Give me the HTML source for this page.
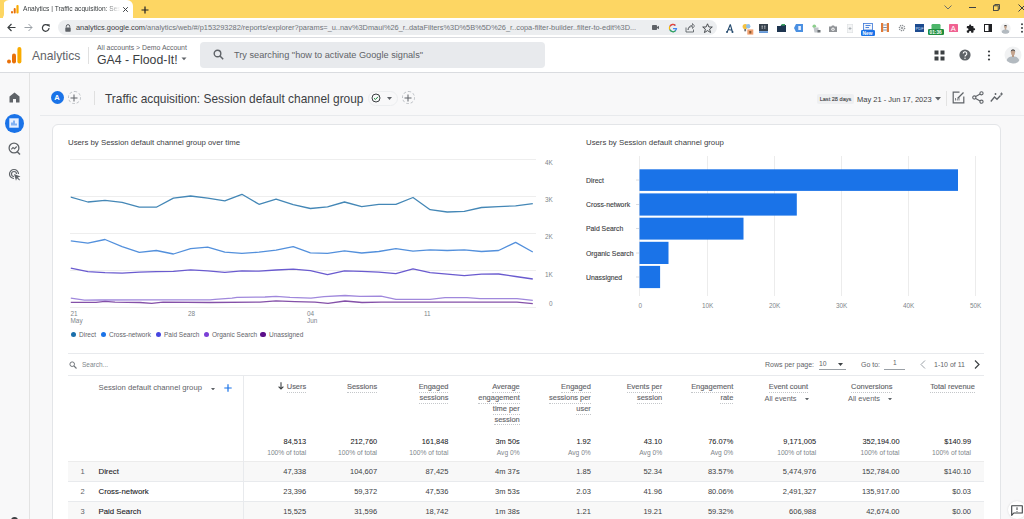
<!DOCTYPE html>
<html><head><meta charset="utf-8">
<style>
*{box-sizing:border-box;margin:0;padding:0}
html,body{width:1024px;height:519px;overflow:hidden;background:#f8f8f9;font-family:"Liberation Sans",sans-serif;color:#3c4043}
.a{position:absolute;white-space:nowrap}
svg{display:block}
#tabs{position:absolute;left:0;top:0;width:1024px;height:18px;background:#fdd663}
#tab{position:absolute;left:3px;top:0;width:130px;height:19px;background:#fff;border-radius:6px 6px 0 0}
#toolbar{position:absolute;left:0;top:18px;width:1024px;height:20px;background:#fff;border-bottom:1px solid #dadce0}
#omni{position:absolute;left:58px;top:20px;width:659px;height:15px;background:#eceef0;border-radius:8px}
#gahdr{position:absolute;left:0;top:38px;width:1024px;height:35px;background:#fff;border-bottom:1px solid #dadce0}
#nav{position:absolute;left:0;top:73px;width:30px;height:446px;background:#f8f8f9;border-right:1px solid #e3e3e3}
#titlerow{position:absolute;left:40px;top:73px;width:984px;height:43px;border-bottom:1px solid #e8eaed}
#card{position:absolute;left:52px;top:124px;width:949px;height:420px;background:#fff;border:1px solid #e3e5e8;border-radius:6px}
.u{border-bottom:1px dotted #c4c7ca;padding-bottom:0.5px}
.hd{font-size:7.45px;line-height:10.9px;color:#5f6368;-webkit-text-stroke:0.12px #5f6368}
.tt{font-size:7.4px;line-height:10px;color:#202124;-webkit-text-stroke:0.05px #202124}
.st{font-size:6.7px;line-height:9px;color:#80868b}
.rv{font-size:7.5px;line-height:10px;color:#3c4043}
.rn{font-size:7.5px;line-height:10px;color:#5f6368}
.rl{font-size:7.8px;line-height:10px;color:#202124;-webkit-text-stroke:0.1px #202124}

</style></head><body>

<div id="tabs"></div>
<div id="tab"></div>
<div id="toolbar"></div>
<div id="omni"></div>

<!-- tab strip -->
<div class="a" style="left:0;top:0;width:4px;height:18px;background:#fdd663;border-bottom-right-radius:4px;z-index:2"></div>
<svg class="a" style="left:11px;top:5px" width="8" height="9" viewBox="0 0 8 9"><rect x="0" y="6" width="2" height="2.6" rx="1" fill="#e8710a"/><rect x="2.7" y="3" width="2" height="5.6" rx="1" fill="#e8710a"/><rect x="5.4" y="0" width="2.2" height="8.6" rx="1" fill="#f9ab00"/></svg>
<div class="a" style="left:23px;top:5px;font-size:6.6px;color:#3c4043;width:97px;overflow:hidden;-webkit-mask-image:linear-gradient(90deg,#000 85%,transparent)">Analytics | Traffic acquisition: Session default</div>
<svg class="a" style="left:121.5px;top:6px" width="7" height="7" viewBox="0 0 7 7"><path d="M1.2 1.2L5.8 5.8M5.8 1.2L1.2 5.8" stroke="#3c4043" stroke-width="1"/></svg>
<svg class="a" style="left:140.5px;top:5.5px" width="8" height="8" viewBox="0 0 8 8"><path d="M4 0.5V7.5M0.5 4H7.5" stroke="#202124" stroke-width="1.2"/></svg>
<svg class="a" style="left:944px;top:5px" width="8" height="5" viewBox="0 0 8 5"><path d="M0.5 0.5L4 4L7.5 0.5" stroke="#5f6368" stroke-width="0.9" fill="none"/></svg>
<div class="a" style="left:969px;top:7px;width:7px;height:1px;background:#3c4043"></div>
<svg class="a" style="left:993px;top:4px" width="7" height="7" viewBox="0 0 7 7"><rect x="0.5" y="1.8" width="4.7" height="4.7" fill="none" stroke="#3c4043" stroke-width="0.9"/><path d="M1.8 1.8V0.5H6.5V5.2H5.2" fill="none" stroke="#3c4043" stroke-width="0.9"/></svg>
<svg class="a" style="left:1018px;top:3.5px" width="8" height="8" viewBox="0 0 8 8"><path d="M0.5 0.5L7.5 7.5M7.5 0.5L0.5 7.5" stroke="#3c4043" stroke-width="1"/></svg>
<!-- toolbar -->
<svg class="a" style="left:7px;top:23px" width="9" height="9" viewBox="0 0 9 9"><path d="M8.5 4.5H1M4.5 1L1 4.5L4.5 8" stroke="#3c4043" stroke-width="1.2" fill="none"/></svg>
<svg class="a" style="left:24px;top:23px" width="9" height="9" viewBox="0 0 9 9"><path d="M0.5 4.5H8M4.5 1L8 4.5L4.5 8" stroke="#9aa0a6" stroke-width="1" fill="none"/></svg>
<svg class="a" style="left:41px;top:23px" width="10" height="10" viewBox="0 0 10 10"><path d="M8 5A3.3 3.3 0 1 1 7 2.6" stroke="#3c4043" stroke-width="1.2" fill="none"/><path d="M5.5 1.2H8.6V4.3Z" fill="#3c4043"/></svg>
<svg class="a" style="left:65px;top:24px" width="6" height="8" viewBox="0 0 6 8"><path d="M1.3 3.5V2.3A1.7 1.7 0 0 1 4.7 2.3V3.5" stroke="#5f6368" stroke-width="1" fill="none"/><rect x="0.3" y="3.4" width="5.4" height="4.3" rx="0.6" fill="#5f6368"/></svg>
<div class="a" style="left:76px;top:23px;font-size:7.4px;line-height:9px;color:#6f7378"><span style="color:#3c4043">analytics.google.com</span>/analytics/web/#/p153293282/reports/explorer?params=_u..nav%3Dmaui%26_r..dataFilters%3D%5B%5D%26_r..copa-filter-builder..filter-to-edit%3D...</div>

<!-- omnibox icons -->
<svg class="a" style="left:651.5px;top:25px" width="7" height="5" viewBox="0 0 7 5"><rect x="0" y="0" width="5" height="5" rx="0.8" fill="#5f6368"/><path d="M5 2L7 0.7V4.3L5 3Z" fill="#5f6368"/></svg>
<svg class="a" style="left:668px;top:23px" width="10" height="10" viewBox="0 0 10 10"><path d="M9.2 5.1H5V6.3H7.6A2.9 2.9 0 1 1 6.9 2.9L7.8 2A4.1 4.1 0 1 0 9.2 5.1Z" fill="#4285f4"/><path d="M1.3 3A4.1 4.1 0 0 1 7.8 2L6.9 2.9A2.9 2.9 0 0 0 2.4 3.6Z" fill="#ea4335"/><path d="M1.3 3L2.4 3.6A2.9 2.9 0 0 0 2.4 6.4L1.3 7A4.1 4.1 0 0 1 1.3 3Z" fill="#fbbc05"/><path d="M1.3 7L2.4 6.4A2.9 2.9 0 0 0 7.1 7.3L8 8.1A4.1 4.1 0 0 1 1.3 7Z" fill="#34a853"/></svg>
<svg class="a" style="left:685px;top:23px" width="10" height="10" viewBox="0 0 10 10"><path d="M1 4.5V9H8.5V6.5" stroke="#5f6368" stroke-width="0.9" fill="none"/><path d="M3 7C3.5 4.5 5 3.5 7.5 3.5V5.5L9.5 3L7.5 0.5V2.3C4.5 2.5 3.2 4.5 3 7Z" stroke="#5f6368" stroke-width="0.8" fill="none"/></svg>
<svg class="a" style="left:702px;top:22.5px" width="11" height="11" viewBox="0 0 11 11"><path d="M5.5 0.8L6.9 4H10.3L7.6 6.1L8.6 9.6L5.5 7.6L2.4 9.6L3.4 6.1L0.7 4H4.1Z" stroke="#3c4043" stroke-width="0.9" fill="none" stroke-linejoin="round"/></svg>
<!-- extension icons -->
<svg class="a" style="left:725px;top:23.5px" width="9" height="9" viewBox="0 0 9 9"><path d="M5.3 0.5L2.2 8M5.3 0.5L7.5 8M3.5 5.5L7 6.3" stroke="#244a6e" stroke-width="1.1" fill="none"/><circle cx="2" cy="8" r="1" fill="#244a6e"/><circle cx="7.5" cy="8" r="1" fill="#244a6e"/></svg>
<svg class="a" style="left:742px;top:23px" width="12" height="12" viewBox="0 0 12 12"><circle cx="3.2" cy="3.5" r="2.6" fill="#f5c242"/><rect x="2.3" y="6" width="1.8" height="2.3" fill="#6b7075"/><circle cx="6.2" cy="3.3" r="2.2" fill="#8fc0ea"/><rect x="5.3" y="6.4" width="6" height="5.2" fill="#f0a070"/><rect x="7.3" y="8" width="2" height="2.5" fill="#8a5a30"/></svg>
<svg class="a" style="left:759px;top:23.5px" width="9" height="9" viewBox="0 0 9 9"><rect x="0" y="0" width="9" height="7" fill="#37424d"/><path d="M2.5 2.2H4M5 2.2H6.5M2.5 4H4M5 4H6.5" stroke="#e8eaed" stroke-width="0.8"/><rect x="0" y="7.3" width="9" height="1.5" fill="#3f7fcf"/></svg>
<svg class="a" style="left:777px;top:24px" width="9" height="8" viewBox="0 0 9 8"><path d="M0 2H3.5L4.3 1H9V8H0Z" fill="#1e3550"/><rect x="4.5" y="0" width="3.5" height="1.6" fill="#3aa35f"/></svg>
<svg class="a" style="left:794px;top:24px" width="9" height="8" viewBox="0 0 9 8"><path d="M2 0H9V8H2L0 4Z" fill="#4a90e2"/><rect x="4.3" y="2" width="2.6" height="4" fill="#e8f0fe"/></svg>
<svg class="a" style="left:811.5px;top:23.5px" width="9" height="9" viewBox="0 0 9 9"><circle cx="2.3" cy="2.3" r="1.8" fill="#8ccf8c"/><path d="M1.5 3.5H6.5V8.5H2.5Z" fill="#c0c4c8"/><path d="M5.5 6H8.5V8.5H5.5Z" fill="#6b7075"/></svg>
<svg class="a" style="left:828.5px;top:24.5px" width="8" height="7" viewBox="0 0 8 7"><path d="M0 1.5H2.3L3 0.5H5L5.7 1.5H8V7H0Z" fill="#8f9296"/><circle cx="4" cy="4.2" r="1.6" fill="#fff"/><circle cx="4" cy="4.2" r="0.8" fill="#8f9296"/></svg>
<svg class="a" style="left:846.5px;top:23.5px" width="6" height="9" viewBox="0 0 6 9"><rect x="0.3" y="0.3" width="5.4" height="8.4" fill="#f4f5f6" stroke="#dcdfe2" stroke-width="0.6"/><path d="M1.5 4.5H4.5M3 3V6" stroke="#9aa0a6" stroke-width="0.7"/></svg>
<svg class="a" style="left:860.5px;top:22.5px" width="14" height="13" viewBox="0 0 14 13"><rect x="2.5" y="0.5" width="9" height="6.5" fill="#f3f6fb" stroke="#3c78d8" stroke-width="0.8"/><path d="M4.5 2.5H9.5M4.5 4.5H8" stroke="#3c78d8" stroke-width="0.9"/><rect x="0" y="7" width="14" height="6" rx="1.2" fill="#1a73e8"/><text x="1.6" y="11.8" font-size="4.8" font-weight="700" fill="#fff" font-family="Liberation Sans">New</text></svg>
<svg class="a" style="left:880.5px;top:23.3px" width="8" height="9" viewBox="0 0 8 9"><rect x="0" y="0" width="2.2" height="9" fill="#e07b39"/><rect x="5.8" y="0" width="2.2" height="9" fill="#e07b39"/><path d="M2.2 2H5.8M2.2 4.5H5.8M2.2 7H5.8" stroke="#7d8fa8" stroke-width="1"/></svg>
<svg class="a" style="left:898px;top:23.5px" width="8" height="8" viewBox="0 0 8 8"><circle cx="4" cy="4" r="2.6" stroke="#8a8e92" stroke-width="1.4" fill="none" stroke-dasharray="1.2 0.8"/><circle cx="4" cy="4" r="1" fill="#8a8e92"/></svg>
<svg class="a" style="left:914.5px;top:23.5px" width="9" height="8" viewBox="0 0 9 8"><rect x="0" y="0" width="9" height="8" fill="#1d4b8f"/><text x="0.6" y="5.6" font-size="4" fill="#d6e4f7" font-family="Liberation Sans">PDF</text></svg>
<svg class="a" style="left:928px;top:23.5px" width="16" height="11" viewBox="0 0 16 11"><rect x="3.5" y="0" width="9" height="5.5" rx="1.2" fill="#4db66a"/><rect x="0" y="5" width="16" height="6" rx="1.3" fill="#1e8e3e"/><text x="1.5" y="9.8" font-size="4.8" font-weight="700" fill="#fff" font-family="Liberation Sans">01:36</text></svg>
<svg class="a" style="left:949px;top:23.5px" width="9" height="8.5" viewBox="0 0 9 8.5"><rect x="0" y="0" width="9" height="8.5" rx="0.6" fill="#f06292"/><text x="1.7" y="7.3" font-size="7.5" fill="#fff" font-family="Liberation Sans">A</text></svg>
<svg class="a" style="left:966px;top:23.5px" width="9.5" height="9.5" viewBox="0 0 24 24"><path d="M20.5 11H19V7c0-1.1-.9-2-2-2h-4V3.5C13 2.120 11.88 1 10.5 1S8 2.12 8 3.5V5H4c-1.1 0-1.99.9-1.99 2v3.8H3.5c1.49 0 2.7 1.21 2.7 2.7s-1.21 2.7-2.7 2.7H2V20c0 1.1.9 2 2 2h3.8v-1.5c0-1.49 1.21-2.7 2.7-2.7 1.49 0 2.7 1.21 2.7 2.7V22H17c1.1 0 2-.9 2-2v-4h1.5c1.38 0 2.5-1.12 2.5-2.5S21.88 11 20.5 11z" fill="#202124"/></svg>
<svg class="a" style="left:983.5px;top:24px" width="8.5" height="8" viewBox="0 0 8.5 8"><rect x="0.5" y="0.5" width="7.5" height="7" fill="none" stroke="#202124" stroke-width="1"/><rect x="4.5" y="0.5" width="3.5" height="7" fill="#202124"/></svg>
<svg class="a" style="left:1000px;top:22.5px" width="11" height="11" viewBox="0 0 18 18"><defs><clipPath id="av1"><circle cx="9" cy="9" r="8.5"/></clipPath></defs><circle cx="9" cy="9" r="8.5" fill="#f1f2f3"/><g clip-path="url(#av1)"><path d="M2 19C2 12.5 4.5 10.5 9 10.5S16 12.5 16 19Z" fill="#b3bac0"/><rect x="8" y="8.5" width="2" height="2.5" fill="#b89a85"/><ellipse cx="9" cy="6.6" rx="2.1" ry="2.7" fill="#c4a48e"/><path d="M6.8 6C6.8 3.8 7.8 3.4 9 3.4S11.2 3.8 11.2 6C10.7 5 10 4.6 9 4.6S7.3 5 6.8 6Z" fill="#2e2e2e"/></g></svg>
<svg class="a" style="left:1020px;top:23px" width="4" height="10" viewBox="0 0 4 10"><circle cx="2" cy="1.3" r="1" fill="#3c4043"/><circle cx="2" cy="5" r="1" fill="#3c4043"/><circle cx="2" cy="8.7" r="1" fill="#3c4043"/></svg>
<div id="gahdr"></div>
<div id="nav"></div>
<!-- GA header -->
<svg class="a" style="left:7px;top:47px" width="15" height="17" viewBox="0 0 15 17"><circle cx="2" cy="14.6" r="2" fill="#e8710a"/><rect x="5" y="6.5" width="4" height="10.1" rx="2" fill="#e8710a"/><rect x="10.4" y="0" width="4" height="16.6" rx="2" fill="#f9ab00"/></svg>
<div class="a" style="left:32px;top:49px;font-size:12.1px;line-height:15px;color:#5f6368">Analytics</div>
<div class="a" style="left:88px;top:47px;width:1px;height:17px;background:#e0e0e0"></div>
<div class="a" style="left:97px;top:43px;font-size:6.9px;line-height:9px;color:#5f6368">All accounts &gt; Demo Account</div>
<div class="a" style="left:97px;top:52.5px;font-size:12.3px;line-height:14px;color:#3c4043">GA4 - Flood-It!</div>
<svg class="a" style="left:181px;top:57px" width="6" height="4" viewBox="0 0 6 4"><path d="M0.5 0.5H5.5L3 3.3Z" fill="#5f6368"/></svg>
<div class="a" style="left:200px;top:42px;width:345px;height:26px;background:#e8eaed;border-radius:4px"></div>
<svg class="a" style="left:213px;top:49px" width="11" height="11" viewBox="0 0 11 11"><circle cx="4.5" cy="4.5" r="3.3" stroke="#5f6368" stroke-width="1.4" fill="none"/><path d="M7 7L10.2 10.2" stroke="#5f6368" stroke-width="1.5"/></svg>
<div class="a" style="left:234px;top:49px;font-size:9.2px;line-height:12px;color:#5f6368">Try searching "how to activate Google signals"</div>
<svg class="a" style="left:934px;top:50px" width="11" height="11" viewBox="0 0 11 11"><rect x="0.5" y="0.5" width="4" height="4" fill="#3c4043"/><rect x="6.5" y="0.5" width="4" height="4" fill="#3c4043"/><rect x="0.5" y="6.5" width="4" height="4" fill="#3c4043"/><rect x="6.5" y="6.5" width="4" height="4" fill="#3c4043"/></svg>
<svg class="a" style="left:959px;top:49px" width="12" height="12" viewBox="0 0 12 12"><circle cx="6" cy="6" r="5.6" fill="#5f6368"/><path d="M4.2 4.6A1.8 1.8 0 1 1 6.8 6.2C6.2 6.6 6 6.9 6 7.6" stroke="#fff" stroke-width="1.1" fill="none"/><circle cx="6" cy="9.2" r="0.7" fill="#fff"/></svg>
<svg class="a" style="left:987px;top:50px" width="4" height="11" viewBox="0 0 4 11"><circle cx="2" cy="1.5" r="1.1" fill="#3c4043"/><circle cx="2" cy="5.5" r="1.1" fill="#3c4043"/><circle cx="2" cy="9.5" r="1.1" fill="#3c4043"/></svg>
<svg class="a" style="left:1004px;top:46px" width="18" height="18" viewBox="0 0 18 18"><defs><clipPath id="av2"><circle cx="9" cy="9" r="8.5"/></clipPath></defs><circle cx="9" cy="9" r="8.5" fill="#f1f2f3"/><g clip-path="url(#av2)"><path d="M2 19C2 12.5 4.5 10.5 9 10.5S16 12.5 16 19Z" fill="#b3bac0"/><rect x="8" y="8.5" width="2" height="2.5" fill="#b89a85"/><ellipse cx="9" cy="6.6" rx="2.1" ry="2.7" fill="#c4a48e"/><path d="M6.8 6C6.8 3.8 7.8 3.4 9 3.4S11.2 3.8 11.2 6C10.7 5 10 4.6 9 4.6S7.3 5 6.8 6Z" fill="#2e2e2e"/></g></svg>

<div id="titlerow"></div>
<!-- left nav -->
<svg class="a" style="left:9px;top:92px" width="11" height="11" viewBox="0 0 11 11"><path d="M5.5 0.5L10.5 4.5V10.5H7V7H4V10.5H0.5V4.5Z" fill="#5f6368"/></svg>
<div class="a" style="left:4.5px;top:113.5px;width:19px;height:19px;border-radius:50%;background:#1a73e8"></div>
<svg class="a" style="left:9px;top:118px" width="10" height="10" viewBox="0 0 10 10"><rect x="0.3" y="0.3" width="9.4" height="9.4" fill="#e8f0fe"/><path d="M3 7.5V4.5M5 7.5V2.5M7 7.5V5.5" stroke="#1a73e8" stroke-width="1"/></svg>
<svg class="a" style="left:8px;top:142px" width="13" height="13" viewBox="0 0 13 13"><circle cx="6" cy="6" r="4.9" stroke="#5f6368" stroke-width="1.3" fill="none"/><path d="M3.3 7.3L5 5.5L6.6 6.7L8.7 4.5" stroke="#5f6368" stroke-width="1.1" fill="none"/><path d="M9 9.5L12 12.5" stroke="#5f6368" stroke-width="1.4"/></svg>
<svg class="a" style="left:8px;top:168px" width="13" height="13" viewBox="0 0 13 13"><path d="M10.5 6A4.5 4.5 0 1 0 6 10.5" stroke="#5f6368" stroke-width="1.2" fill="none"/><path d="M8.5 6A2.5 2.5 0 1 0 6 8.5" stroke="#5f6368" stroke-width="1.1" fill="none"/><path d="M6 6L12.5 8.5L9.8 9.5L12 11.8L11.3 12.5L9 10.3L8 12.7Z" fill="#5f6368"/></svg>
<!-- title row -->
<div class="a" style="left:50.5px;top:91px;width:13px;height:13px;border-radius:50%;background:#1a73e8;color:#fff;font-size:7.5px;font-weight:700;text-align:center;line-height:13px">A</div>
<div class="a" style="left:67.5px;top:91px;width:13px;height:13px;border-radius:50%;border:1px dashed #bdc1c6"></div>
<svg class="a" style="left:70px;top:93.5px" width="8" height="8" viewBox="0 0 8 8"><path d="M4 0.5V7.5M0.5 4H7.5" stroke="#5f6368" stroke-width="1"/></svg>
<div class="a" style="left:94px;top:91px;width:1px;height:14px;background:#e0e0e0"></div>
<div class="a" style="left:105px;top:91.5px;font-size:11.9px;line-height:15px;color:#3c4043">Traffic acquisition: Session default channel group</div>
<div class="a" style="left:368px;top:90.5px;width:30px;height:15px;border-radius:8px;border:1px solid #eceef0"></div>
<svg class="a" style="left:371px;top:93px" width="10" height="10" viewBox="0 0 10 10"><circle cx="5" cy="5" r="4" stroke="#3c4043" stroke-width="1" fill="none"/><path d="M3 5.2L4.4 6.5L7 3.8" stroke="#188038" stroke-width="1" fill="none"/></svg>
<svg class="a" style="left:387px;top:97px" width="5" height="3" viewBox="0 0 5 3"><path d="M0 0H5L2.5 3Z" fill="#5f6368"/></svg>
<div class="a" style="left:401.5px;top:91px;width:13px;height:13px;border-radius:50%;border:1px dashed #bdc1c6"></div>
<svg class="a" style="left:404px;top:93.5px" width="8" height="8" viewBox="0 0 8 8"><path d="M4 0.5V7.5M0.5 4H7.5" stroke="#5f6368" stroke-width="1"/></svg>
<div class="a" style="left:817px;top:94px;width:37px;height:10px;border-radius:2px;background:#eeeff1;font-size:5.6px;line-height:10px;color:#3c4043;text-align:center;-webkit-text-stroke:0.1px #3c4043">Last 28 days</div>
<div class="a" style="left:857px;top:93.8px;font-size:7.5px;line-height:12px;color:#3c4043">May 21 - Jun 17, 2023</div>
<svg class="a" style="left:935px;top:97px" width="6" height="4" viewBox="0 0 6 4"><path d="M0 0H6L3 3.5Z" fill="#5f6368"/></svg>
<div class="a" style="left:946px;top:91px;width:1px;height:15px;background:#e3e3e3"></div>
<svg class="a" style="left:952px;top:91px" width="13" height="13" viewBox="0 0 13 13"><path d="M7.5 1.2H1.2V11.8H11.8V5.5" stroke="#5f6368" stroke-width="1.2" fill="none"/><path d="M5.5 7.5L11.5 1.5" stroke="#5f6368" stroke-width="1.3"/><path d="M3.5 9.5V7M5.3 9.5V8M7 9.5V6.5" stroke="#5f6368" stroke-width="0.8"/></svg>
<svg class="a" style="left:972px;top:91px" width="12" height="13" viewBox="0 0 12 13"><circle cx="9.5" cy="2.3" r="1.6" stroke="#5f6368" stroke-width="1.1" fill="none"/><circle cx="2.3" cy="6.5" r="1.6" stroke="#5f6368" stroke-width="1.1" fill="none"/><circle cx="9.5" cy="10.7" r="1.6" stroke="#5f6368" stroke-width="1.1" fill="none"/><path d="M3.7 5.6L8.1 3.1M3.7 7.4L8.1 9.9" stroke="#5f6368" stroke-width="1.1"/></svg>
<svg class="a" style="left:990px;top:92px" width="14" height="11" viewBox="0 0 14 11"><path d="M0.8 9.5L4.5 5L7 7.3L10.5 3.5" stroke="#5f6368" stroke-width="1.3" fill="none"/><path d="M11.5 0.5V3.5M10 2H13M5.5 1V3M4.5 2H6.5" stroke="#5f6368" stroke-width="0.9"/></svg>

<div id="card"></div>
<!-- card content: charts -->
<div class="a" style="left:68px;top:138px;font-size:7.8px;line-height:10px;color:#3c4043">Users by Session default channel group over time</div>
<svg class="a" style="left:0;top:0" width="1024" height="519" viewBox="0 0 1024 519">
<g stroke="#eeeeee" stroke-width="1">
<path d="M70 159.5H536M70 196.5H536M70 233.5H536M70 270.5H536M70 307.5H536"/>
</g>
<g fill="none" stroke-width="1.3" stroke-linejoin="round">
<polyline points="70.8,298.2 84.5,300.2 100.0,300.0 145.0,299.8 210.0,299.8 215.0,299.4 232.0,298.2 237.0,297.4 265.0,297.0 276.0,296.4 290.0,297.4 311.0,298.2 324.0,296.6 345.0,295.5 360.0,296.4 381.0,296.1 396.0,299.4 430.0,299.4 445.0,297.7 467.0,297.7 480.0,298.6 517.0,298.6 532.8,300.3" stroke="#a088dc"/>
<polyline points="70.8,302.3 96.0,302.3 105.0,301.3 115.0,302.1 140.0,302.5 151.7,303.4 163.0,302.1 210.0,302.5 260.0,302.1 276.0,300.8 295.0,301.6 315.0,302.1 328.0,303.3 345.0,301.0 362.0,302.5 381.0,302.1 445.0,302.1 517.0,302.1 532.8,303.7" stroke="#8450a8"/>
<polyline points="70.8,268.2 87.9,271.7 105.0,272.7 122.1,273.2 139.3,272.1 156.3,271.7 173.4,271.4 190.6,269.8 207.7,270.8 224.8,272.3 241.9,270.8 259.0,271.2 276.1,270.0 293.2,269.2 310.4,270.6 327.5,274.6 344.5,270.8 361.7,271.4 378.8,272.1 395.9,273.7 413.0,268.9 430.1,272.7 447.2,274.1 464.3,275.6 481.5,274.2 498.6,274.0 515.6,276.5 532.8,279.0" stroke="#6a5bcf"/>
<polyline points="70.8,240.9 87.9,243.2 105.0,239.5 122.1,246.7 139.3,252.4 156.3,250.5 173.4,254.0 190.6,248.6 207.7,247.1 224.8,252.1 241.9,253.4 259.0,252.1 276.1,250.2 293.2,246.7 310.4,252.9 327.5,253.4 344.5,250.9 361.7,253.0 378.8,251.5 395.9,248.6 413.0,251.1 430.1,249.8 447.2,250.5 464.3,249.9 481.5,251.5 498.6,250.5 515.6,242.4 532.8,252.0" stroke="#5390dc"/>
<polyline points="70.8,197.1 87.9,202.0 105.0,200.4 122.1,202.3 139.3,207.2 156.3,207.2 173.4,198.1 190.6,196.0 207.7,198.1 224.8,200.8 241.9,194.3 259.0,204.3 276.1,199.1 293.2,204.7 310.4,208.5 327.5,206.8 344.5,202.0 361.7,206.6 378.8,204.3 395.9,204.3 413.0,197.5 430.1,209.7 447.2,212.0 464.3,211.4 481.5,207.5 498.6,206.6 515.6,205.8 532.8,203.7" stroke="#4487b6"/>
</g>
<g stroke="#ececec" stroke-width="1">
<path d="M639.5 156V296M707.5 156V296M774.5 156V296M841.5 156V296M908.5 156V296M975.5 156V296"/>
</g>
<g fill="#1a73e8">
<rect x="639.5" y="169.3" width="318.5" height="21.6"/>
<rect x="639.5" y="193.4" width="157.3" height="22.2"/>
<rect x="639.5" y="217.7" width="104" height="21.9"/>
<rect x="639.5" y="241.8" width="29" height="22.2"/>
<rect x="639.5" y="265.9" width="20.6" height="22.2"/>
</g>
<g stroke="#dadce0" stroke-width="1"><path d="M636 180H639M636 204.5H639M636 228.5H639M636 253H639M636 277H639"/></g>
</svg>
<div class="a" style="left:545px;top:158px;font-size:6.4px;line-height:9px;color:#80868b">4K</div>
<div class="a" style="left:545px;top:195px;font-size:6.4px;line-height:9px;color:#80868b">3K</div>
<div class="a" style="left:545px;top:232px;font-size:6.4px;line-height:9px;color:#80868b">2K</div>
<div class="a" style="left:545px;top:270px;font-size:6.4px;line-height:9px;color:#80868b">1K</div>
<div class="a" style="left:549px;top:299px;font-size:6.4px;line-height:9px;color:#80868b">0</div>
<div class="a" style="left:70.5px;top:310px;font-size:6.4px;line-height:7px;color:#80868b">21<br>May</div>
<div class="a" style="left:188px;top:310px;font-size:6.4px;line-height:7px;color:#80868b">28</div>
<div class="a" style="left:307px;top:310px;font-size:6.4px;line-height:7px;color:#80868b">04<br>Jun</div>
<div class="a" style="left:424px;top:310px;font-size:6.4px;line-height:7px;color:#80868b">11</div>
<div class="a" style="left:70.6px;top:332.1px;width:5.2px;height:5.2px;border-radius:50%;background:#1a6fab"></div><div class="a" style="left:79px;top:330px;font-size:6.5px;line-height:9px;color:#5f6368">Direct</div>
<div class="a" style="left:101.1px;top:332.1px;width:5.2px;height:5.2px;border-radius:50%;background:#1a73e8"></div><div class="a" style="left:109px;top:330px;font-size:6.5px;line-height:9px;color:#5f6368">Cross-network</div>
<div class="a" style="left:155.9px;top:332.1px;width:5.2px;height:5.2px;border-radius:50%;background:#4646e0"></div><div class="a" style="left:164px;top:330px;font-size:6.5px;line-height:9px;color:#5f6368">Paid Search</div>
<div class="a" style="left:203.8px;top:332.1px;width:5.2px;height:5.2px;border-radius:50%;background:#7b3fd6"></div><div class="a" style="left:212px;top:330px;font-size:6.5px;line-height:9px;color:#5f6368">Organic Search</div>
<div class="a" style="left:260.4px;top:332.1px;width:5.2px;height:5.2px;border-radius:50%;background:#5b0e8a"></div><div class="a" style="left:269px;top:330px;font-size:6.5px;line-height:9px;color:#5f6368">Unassigned</div>

<div class="a" style="left:586px;top:138px;font-size:7.8px;line-height:10px;color:#3c4043">Users by Session default channel group</div>
<div class="a" style="left:586px;top:175.5px;font-size:6.85px;line-height:9px;color:#3c4043;-webkit-text-stroke:0.12px #3c4043">Direct</div>
<div class="a" style="left:586px;top:200px;font-size:6.85px;line-height:9px;color:#3c4043;-webkit-text-stroke:0.12px #3c4043">Cross-network</div>
<div class="a" style="left:586px;top:224px;font-size:6.85px;line-height:9px;color:#3c4043;-webkit-text-stroke:0.12px #3c4043">Paid Search</div>
<div class="a" style="left:586px;top:248.5px;font-size:6.85px;line-height:9px;color:#3c4043;-webkit-text-stroke:0.12px #3c4043">Organic Search</div>
<div class="a" style="left:586px;top:272.5px;font-size:6.85px;line-height:9px;color:#3c4043;-webkit-text-stroke:0.12px #3c4043">Unassigned</div>
<div class="a" style="left:638.5px;top:301px;font-size:6.4px;line-height:9px;color:#80868b">0</div>
<div class="a" style="left:702px;top:301px;font-size:6.4px;line-height:9px;color:#80868b">10K</div>
<div class="a" style="left:769px;top:301px;font-size:6.4px;line-height:9px;color:#80868b">20K</div>
<div class="a" style="left:836px;top:301px;font-size:6.4px;line-height:9px;color:#80868b">30K</div>
<div class="a" style="left:903px;top:301px;font-size:6.4px;line-height:9px;color:#80868b">40K</div>
<div class="a" style="left:970px;top:301px;font-size:6.4px;line-height:9px;color:#80868b">50K</div>



<!-- table -->
<div class="a" style="left:68px;top:353px;width:916px;height:1px;background:#e8eaed"></div>
<div class="a" style="left:68px;top:375px;width:916px;height:1px;background:#e8eaed"></div>
<div class="a" style="left:68px;top:461px;width:916px;height:20px;background:#f8f8f8;border-top:1px solid #ececec"></div>
<div class="a" style="left:68px;top:481px;width:916px;height:1px;background:#e8eaed"></div>
<div class="a" style="left:68px;top:501px;width:916px;height:20px;background:#f8f8f8;border-top:1px solid #e8eaed"></div>
<div class="a" style="left:243px;top:376px;width:1px;height:143px;background:#e8eaed"></div>
<svg class="a" style="left:69px;top:361px" width="8" height="8" viewBox="0 0 8 8"><circle cx="3.2" cy="3.2" r="2.3" stroke="#70757a" stroke-width="1" fill="none"/><path d="M5 5L7.5 7.5" stroke="#70757a" stroke-width="1.1"/></svg>
<div class="a" style="left:82px;top:360px;font-size:6.5px;line-height:10px;color:#80868b">Search...</div>
<div class="a" style="left:765px;top:359.5px;font-size:7px;line-height:10px;color:#5f6368">Rows per page:</div>
<div class="a" style="left:819px;top:358.5px;font-size:6.8px;line-height:10px;color:#5f6368">10</div>
<div class="a" style="left:819px;top:369px;width:27px;height:1px;background:#9aa0a6"></div>
<svg class="a" style="left:837.5px;top:362.5px" width="5" height="3" viewBox="0 0 5 3"><path d="M0 0H5L2.5 3Z" fill="#3c4043"/></svg>
<div class="a" style="left:861px;top:359.5px;font-size:7px;line-height:10px;color:#5f6368">Go to:</div>
<div class="a" style="left:893px;top:358px;font-size:6.6px;line-height:10px;color:#5f6368">1</div>
<div class="a" style="left:884px;top:369px;width:21px;height:1px;background:#9aa0a6"></div>
<svg class="a" style="left:920px;top:360px" width="6" height="9" viewBox="0 0 6 9"><path d="M5 0.5L1 4.5L5 8.5" stroke="#9aa0a6" stroke-width="1" fill="none"/></svg>
<div class="a" style="left:934px;top:359.5px;font-size:7px;line-height:10px;color:#5f6368">1-10 of 11</div>
<svg class="a" style="left:974px;top:360px" width="6" height="9" viewBox="0 0 6 9"><path d="M1 0.5L5 4.5L1 8.5" stroke="#3c4043" stroke-width="1.2" fill="none"/></svg>
<div class="a" style="left:98.5px;top:383px;font-size:7.7px;line-height:10px;color:#5f6368">Session default channel group</div>
<svg class="a" style="left:210.5px;top:387.5px" width="4" height="2.5" viewBox="0 0 4 2.5"><path d="M0 0H4L2 2.5Z" fill="#5f6368"/></svg>
<svg class="a" style="left:224px;top:384px" width="8" height="8" viewBox="0 0 8 8"><path d="M4 0.3V7.7M0.3 4H7.7" stroke="#1a73e8" stroke-width="1.2"/></svg>

<div class="a hd" style="right:717.8px;top:382.2px;text-align:right"><svg style="display:inline-block;vertical-align:-1px;margin-right:3px" width="6" height="8" viewBox="0 0 6 8"><path d="M3 0.3V7M0.6 4.6L3 7L5.4 4.6" stroke="#3c4043" stroke-width="1.1" fill="none"/></svg><span class="u">Users</span></div>
<div class="a tt" style="right:717.8px;top:436.7px">84,513</div>
<div class="a st" style="right:717.8px;top:448px">100% of total</div>
<div class="a rv" style="right:717.8px;top:466.7px">47,338</div>
<div class="a rv" style="right:717.8px;top:486.7px">23,396</div>
<div class="a rv" style="right:717.8px;top:506.7px">15,525</div>
<div class="a hd" style="right:646.9px;top:382.2px;text-align:right"><span class="u">Sessions</span></div>
<div class="a tt" style="right:646.9px;top:436.7px">212,760</div>
<div class="a st" style="right:646.9px;top:448px">100% of total</div>
<div class="a rv" style="right:646.9px;top:466.7px">104,607</div>
<div class="a rv" style="right:646.9px;top:486.7px">59,372</div>
<div class="a rv" style="right:646.9px;top:506.7px">31,596</div>
<div class="a hd" style="right:575.6px;top:382.2px;text-align:right"><span class="u">Engaged</span><br><span class="u">sessions</span></div>
<div class="a tt" style="right:575.6px;top:436.7px">161,848</div>
<div class="a st" style="right:575.6px;top:448px">100% of total</div>
<div class="a rv" style="right:575.6px;top:466.7px">87,425</div>
<div class="a rv" style="right:575.6px;top:486.7px">47,536</div>
<div class="a rv" style="right:575.6px;top:506.7px">18,742</div>
<div class="a hd" style="right:504.3px;top:382.2px;text-align:right"><span class="u">Average</span><br><span class="u">engagement</span><br><span class="u">time per</span><br><span class="u">session</span></div>
<div class="a tt" style="right:504.3px;top:436.7px">3m 50s</div>
<div class="a st" style="right:504.3px;top:448px">Avg 0%</div>
<div class="a rv" style="right:504.3px;top:466.7px">4m 37s</div>
<div class="a rv" style="right:504.3px;top:486.7px">3m 53s</div>
<div class="a rv" style="right:504.3px;top:506.7px">1m 38s</div>
<div class="a hd" style="right:433.2px;top:382.2px;text-align:right"><span class="u">Engaged</span><br><span class="u">sessions per</span><br><span class="u">user</span></div>
<div class="a tt" style="right:433.2px;top:436.7px">1.92</div>
<div class="a st" style="right:433.2px;top:448px">Avg 0%</div>
<div class="a rv" style="right:433.2px;top:466.7px">1.85</div>
<div class="a rv" style="right:433.2px;top:486.7px">2.03</div>
<div class="a rv" style="right:433.2px;top:506.7px">1.21</div>
<div class="a hd" style="right:361.8px;top:382.2px;text-align:right"><span class="u">Events per</span><br><span class="u">session</span></div>
<div class="a tt" style="right:361.8px;top:436.7px">43.10</div>
<div class="a st" style="right:361.8px;top:448px">Avg 0%</div>
<div class="a rv" style="right:361.8px;top:466.7px">52.34</div>
<div class="a rv" style="right:361.8px;top:486.7px">41.96</div>
<div class="a rv" style="right:361.8px;top:506.7px">19.21</div>
<div class="a hd" style="right:290.7px;top:382.2px;text-align:right"><span class="u">Engagement</span><br><span class="u">rate</span></div>
<div class="a tt" style="right:290.7px;top:436.7px">76.07%</div>
<div class="a st" style="right:290.7px;top:448px">Avg 0%</div>
<div class="a rv" style="right:290.7px;top:466.7px">83.57%</div>
<div class="a rv" style="right:290.7px;top:486.7px">80.06%</div>
<div class="a rv" style="right:290.7px;top:506.7px">59.32%</div>
<div class="a hd" style="right:216.0px;top:382.2px;text-align:right"><span class="u">Event count</span></div>
<div class="a tt" style="right:207.8px;top:436.7px">9,171,005</div>
<div class="a st" style="right:207.8px;top:448px">100% of total</div>
<div class="a rv" style="right:207.8px;top:466.7px">5,474,976</div>
<div class="a rv" style="right:207.8px;top:486.7px">2,491,327</div>
<div class="a rv" style="right:207.8px;top:506.7px">606,988</div>
<div class="a hd" style="right:131.6px;top:382.2px;text-align:right"><span class="u">Conversions</span></div>
<div class="a tt" style="right:124.5px;top:436.7px">352,194.00</div>
<div class="a st" style="right:124.5px;top:448px">100% of total</div>
<div class="a rv" style="right:124.5px;top:466.7px">152,784.00</div>
<div class="a rv" style="right:124.5px;top:486.7px">135,917.00</div>
<div class="a rv" style="right:124.5px;top:506.7px">42,674.00</div>
<div class="a hd" style="right:49.2px;top:382.2px;text-align:right"><span class="u">Total revenue</span></div>
<div class="a tt" style="right:53.0px;top:436.7px">$140.99</div>
<div class="a st" style="right:53.0px;top:448px">100% of total</div>
<div class="a rv" style="right:53.0px;top:466.7px">$140.10</div>
<div class="a rv" style="right:53.0px;top:486.7px">$0.03</div>
<div class="a rv" style="right:53.0px;top:506.7px">$0.00</div>
<div class="a rn" style="left:80.5px;top:466.7px">1</div>
<div class="a rl" style="left:98.5px;top:466.7px">Direct</div>
<div class="a rn" style="left:80.5px;top:486.7px">2</div>
<div class="a rl" style="left:98.5px;top:486.7px">Cross-network</div>
<div class="a rn" style="left:80.5px;top:506.7px">3</div>
<div class="a rl" style="left:98.5px;top:506.7px">Paid Search</div>

<div class="a" style="left:764.5px;top:393.5px;font-size:7.4px;line-height:10px;color:#5f6368">All events</div>
<svg class="a" style="left:804.5px;top:397.5px" width="4" height="2.5" viewBox="0 0 4 2.5"><path d="M0 0H4L2 2.5Z" fill="#5f6368"/></svg>
<div class="a" style="left:848px;top:393.5px;font-size:7.4px;line-height:10px;color:#5f6368">All events</div>
<svg class="a" style="left:887.5px;top:397.5px" width="4" height="2.5" viewBox="0 0 4 2.5"><path d="M0 0H4L2 2.5Z" fill="#5f6368"/></svg>
<div class="a" style="left:1008px;top:501px;width:18px;height:18px;border-radius:50%;background:#fff;box-shadow:0 0 2px rgba(0,0,0,.15)"></div>
<svg class="a" style="left:1011px;top:504.5px" width="12" height="11" viewBox="0 0 12 11"><path d="M0.7 10.3V0.7H11.3V8H2.7Z" stroke="#3c4043" stroke-width="1.1" fill="none" stroke-linejoin="round"/><path d="M6 2.3V5M6 6.2V7" stroke="#3c4043" stroke-width="1"/></svg>

<div class="a" style="left:11px;top:516.5px;width:7px;height:7px;border-radius:50%;background:#3c4043"></div>
</body></html>
